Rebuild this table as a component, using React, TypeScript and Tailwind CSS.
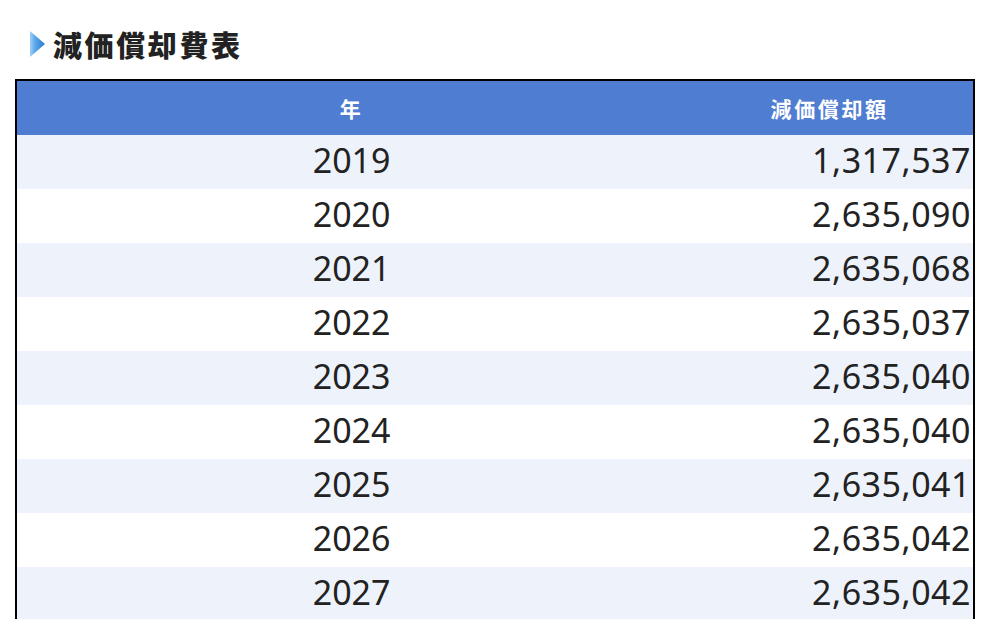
import React from "react";

const rows: [string, string][] = [
  ["2019", "1,317,537"],
  ["2020", "2,635,090"],
  ["2021", "2,635,068"],
  ["2022", "2,635,037"],
  ["2023", "2,635,040"],
  ["2024", "2,635,040"],
  ["2025", "2,635,041"],
  ["2026", "2,635,042"],
  ["2027", "2,635,042"],
];

export default function App() {
  return (
    <div className="w-[1006px] h-[619px] overflow-hidden bg-white" style={{ fontFamily: '"Noto Sans", "Noto Sans CJK JP", sans-serif' }}>
      <div className="mt-[28px] ml-[30px] flex h-[32px] items-center gap-[8px]">
        <svg width="15" height="26" viewBox="0 0 15 26">
          <defs>
            <linearGradient id="ag" x1="0" y1="0" x2="1" y2="0">
              <stop offset="0" stopColor="#9fd0f5" />
              <stop offset="0.35" stopColor="#5aa7ea" />
              <stop offset="1" stopColor="#2a78cf" />
            </linearGradient>
          </defs>
          <polygon points="0,0 15,13 0,26" fill="url(#ag)" />
        </svg>
        <h2
          className="text-[29px] font-black leading-none tracking-[2.6px] text-[#222222]"
          style={{ fontFamily: '"Noto Sans CJK JP", sans-serif' }}
        >
          減価償却費表
        </h2>
      </div>
      <div className="mt-[19px] ml-[15px] w-[960px] border-2 border-black">
        <div
          className="grid h-[54px] grid-cols-[70%_30%] items-center bg-[#4f7dd1] text-[21px] font-bold leading-none tracking-[2.6px] text-white"
          style={{ fontFamily: '"Noto Sans CJK JP", sans-serif' }}
        >
          <div className="text-center">年</div>
          <div className="text-center">減価償却額</div>
        </div>
        {rows.map(([y, v], i) => (
          <div
            key={y}
            className={`grid h-[54px] grid-cols-[70%_30%] items-center pb-[4px] text-[34px] leading-none text-[#222222] ${i % 2 === 0 ? "bg-[#eef3fb]" : "bg-white"}`}
          >
            <div className="text-center">{y}</div>
            <div className="pr-[2px] text-right tracking-[0.5px]">{v}</div>
          </div>
        ))}
      </div>
    </div>
  );
}
